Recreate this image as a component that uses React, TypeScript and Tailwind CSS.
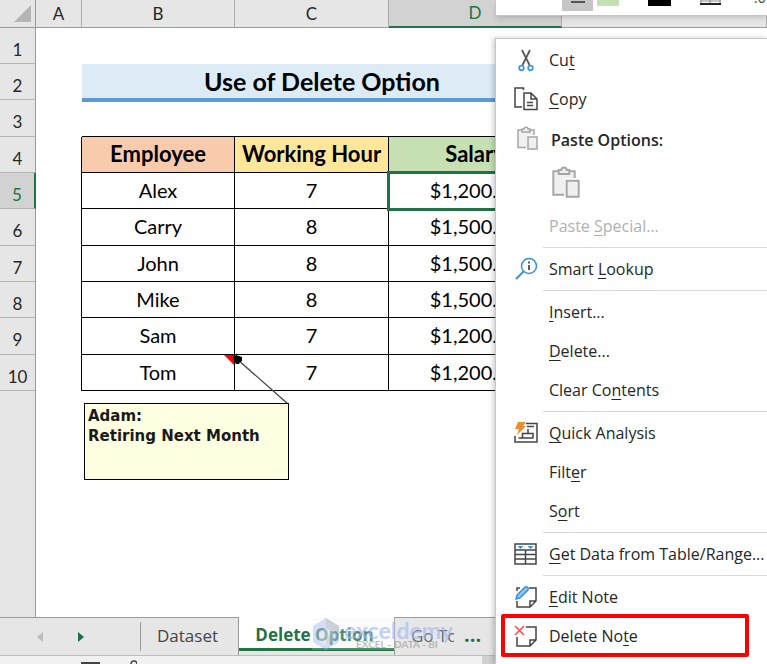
import type { ReactNode } from 'react'
import clsx from 'clsx'

interface Employee {
  row: number
  name: string
  hours: number
  salary: string
  tall?: boolean
  hasNote?: boolean
}

const employees: Employee[] = [
  { row: 5, name: 'Alex', hours: 7, salary: '$1,200.00' },
  { row: 6, name: 'Carry', hours: 8, salary: '$1,500.00', tall: true },
  { row: 7, name: 'John', hours: 8, salary: '$1,500.00' },
  { row: 8, name: 'Mike', hours: 8, salary: '$1,500.00' },
  { row: 9, name: 'Sam', hours: 7, salary: '$1,200.00', tall: true },
  { row: 10, name: 'Tom', hours: 7, salary: '$1,200.00', hasNote: true },
]

const SELECTED_ROW = 5

function RowHeader({ row }: { row: number }) {
  const selected = row === SELECTED_ROW
  return (
    <th
      scope="row"
      className={clsx(
        'border-b border-b-[#b4b4b4] p-0 pt-2 text-[17px]/6 font-normal',
        selected
          ? 'border-r-2 border-r-[#217346] bg-[#d2d2d2] text-[#217346]'
          : 'border-r border-r-[#9b9b9b] bg-[#e6e6e6] text-[#262626]'
      )}
    >
      {row}
    </th>
  )
}

function ColumnHeader({ letter, selected }: { letter: string; selected?: boolean }) {
  return (
    <th
      scope="col"
      className={clsx(
        'border-r border-r-[#ababab] p-0 text-[17px]/6 font-normal',
        selected
          ? 'border-b-2 border-b-[#217346] bg-[#d2d2d2] text-[#217346]'
          : 'border-b border-b-[#9b9b9b] bg-[#e6e6e6] text-[#262626]'
      )}
    >
      {letter}
    </th>
  )
}

function Sheet() {
  const cell = 'border-r border-b border-black p-0 pb-0.5 text-center'
  return (
    <div className="relative flex min-h-0 flex-1 flex-col overflow-hidden bg-white font-['Lato','Liberation_Sans',sans-serif]">
      <table className="w-full shrink-0 table-fixed border-separate border-spacing-0">
        <colgroup>
          <col className="w-9" />
          <col className="w-[46px]" />
          <col className="w-[153px]" />
          <col className="w-[154px]" />
          <col className="w-[173px]" />
          <col />
        </colgroup>
        <thead>
          <tr className="h-7">
            <th className="border-r border-b border-[#9b9b9b] bg-[#e6e6e6] p-0">
              <svg className="ml-3.5 size-[17px]" viewBox="0 0 17 17" aria-label="Select all">
                <path d="M17 0v17H0z" fill="#b4b4b4" />
              </svg>
            </th>
            <ColumnHeader letter="A" />
            <ColumnHeader letter="B" />
            <ColumnHeader letter="C" />
            <ColumnHeader letter="D" selected />
            <ColumnHeader letter="" />
          </tr>
        </thead>
        <tbody>
          <tr className="h-9">
            <RowHeader row={1} />
            <td colSpan={5} />
          </tr>
          <tr className="h-9">
            <RowHeader row={2} />
            <td />
            <td
              colSpan={3}
              className="border-b-2 border-[#5b9bd5] bg-[#ddebf7] p-0 text-center text-[25px]/8 font-bold text-black"
            >
              Use of Delete Option
            </td>
            <td />
          </tr>
          <tr className="h-[37px]">
            <RowHeader row={3} />
            <td className="border-0" />
            <td colSpan={3} className="border-t-2 border-b border-t-[#5b9bd5] border-b-black" />
            <td />
          </tr>
          <tr className="h-9 text-[22px]/7 font-bold text-black">
            <RowHeader row={4} />
            <td className="border-r border-black" />
            <td className={clsx(cell, 'bg-[#f8cbad]')}>Employee</td>
            <td className={clsx(cell, 'bg-[#ffe699]')}>Working Hour</td>
            <td className={clsx(cell, 'bg-[#c6e0b4]')}>Salary</td>
            <td />
          </tr>
          {employees.map((employee) => (
            <tr
              key={employee.row}
              className={clsx('text-xl/7 text-black', employee.tall ? 'h-[37px]' : 'h-9')}
            >
              <RowHeader row={employee.row} />
              <td className="border-r border-black" />
              <td className={clsx(cell, employee.hasNote && 'relative')}>
                {employee.name}
                {employee.hasNote && (
                  <svg className="absolute top-0 right-0 size-2.5" viewBox="0 0 10 10" aria-hidden>
                    <path d="M0 0h10v10z" fill="#ff0000" />
                  </svg>
                )}
              </td>
              <td className={cell}>{employee.hours}</td>
              <td
                className={clsx(
                  cell,
                  employee.row === SELECTED_ROW &&
                    'relative z-10 outline-3 -outline-offset-1 outline-[#217346]'
                )}
              >
                {employee.salary}
              </td>
              <td />
            </tr>
          ))}
        </tbody>
      </table>
      {/* Unused rows */}
      <div className="w-9 flex-1 border-r border-[#9b9b9b] bg-[#e6e6e6]" />

      {/* Note on B10 */}
      <svg className="absolute top-[353px] left-[230px] h-[52px] w-[60px]" viewBox="0 0 60 52" aria-hidden>
        <path d="M7 6l51 45" stroke="#404040" strokeWidth="1.3" />
        <path d="M3 4l3-2 6 2v4l-2 1-1 2H6L4 8z" fill="#000" />
      </svg>
      <div className="absolute top-[403px] left-[84px] h-[77px] w-[205px] border border-black bg-[#ffffe1] px-[3px] py-0.5 font-['DejaVu_Sans',sans-serif] text-[15px]/5 font-bold text-[#1a1a1a]">
        <p>Adam:</p>
        <p>Retiring Next Month</p>
      </div>
    </div>
  )
}

function Watermark() {
  return (
    <div className="pointer-events-none absolute top-0 left-[312px] flex h-8 w-[142px] items-center bg-[#f0f0f0]/30 opacity-70">
      <svg className="h-8 w-7 shrink-0" viewBox="0 0 28 32" aria-hidden>
        <path d="M14 0l13 8v16l-13 8L1 24V8z" fill="#a9bdf2" fillOpacity="0.7" />
        <path d="M14 0l13 8v8L14 10z" fill="#b5b5b5" fillOpacity="0.7" />
        <path d="M14 10l7 5v8l-7 4-7-4v-8z" fill="#ededed" fillOpacity="0.6" />
        <path d="M14 20l7-5v8l-7 4z" fill="#b5b5b5" fillOpacity="0.6" />
      </svg>
      <div className="ml-1 font-['Lato',sans-serif]">
        <p className="text-[23px]/5 font-bold text-[#a9bdf2]">exceldemy</p>
        <p className="ml-3 text-[10px]/2 font-bold whitespace-nowrap text-[#a3a3a3]">EXCEL - DATA - BI</p>
      </div>
    </div>
  )
}

function TabBar() {
  return (
    <div className="relative flex h-[39px] shrink-0 items-stretch border-t border-b border-t-[#9b9b9b] border-b-[#bdbdbd] bg-[#e6e6e6] font-['Open_Sans',sans-serif] text-[17px] text-[#444]">
      <button type="button" aria-label="Previous sheet" className="w-11 pl-9">
        <svg className="size-2.5" viewBox="0 0 10 10">
          <path d="M7 0v10L1 5z" fill="#bdbdbd" />
        </svg>
      </button>
      <button type="button" aria-label="Next sheet" className="w-24 pl-[33px]">
        <svg className="size-2.5" viewBox="0 0 10 10">
          <path d="M1 0v10l6-5z" fill="#1e6f42" />
        </svg>
      </button>
      <div className="my-1 w-px bg-[#9b9b9b]" />
      <button type="button" className="w-[98px] border-r border-[#9b9b9b] pr-1 pb-0.5">
        Dataset
      </button>
      <button
        type="button"
        className="-mt-px mb-1 w-[155px] border-b-3 border-[#217346] bg-white pt-1 pr-1 font-bold text-[#217346]"
      >
        Delete Option
      </button>
      <button type="button" className="w-[60px] overflow-hidden border-l border-[#9b9b9b] pb-0.5 pl-4 text-left whitespace-nowrap">
        Go To
      </button>
      <button type="button" className="pb-1 pl-2.5 text-xl font-bold text-[#1e6f42]">
        ...
      </button>
      <Watermark />
    </div>
  )
}

function StatusBar() {
  return (
    <div className="flex h-2 shrink-0 items-end bg-[#f1f1f1]">
      <svg className="ml-[81px] h-2 w-14" viewBox="0 0 56 8" aria-hidden>
        <path d="M0 7h19" stroke="#444" strokeWidth="2" />
        <circle cx="53" cy="8" r="3" fill="none" stroke="#444" strokeWidth="1.5" />
      </svg>
      <div className="ml-auto h-full w-[285px] bg-[#d0d0d0]" />
    </div>
  )
}

const icons = {
  cut: (
    <>
      <path d="M8 2l7.500 15M16 2L8.500 17" stroke="#555" strokeWidth="1.700" fill="none" />
      <circle cx="7.500" cy="20" r="2.300" stroke="#3a96dd" strokeWidth="1.700" fill="none" />
      <circle cx="16.500" cy="20" r="2.300" stroke="#3a96dd" strokeWidth="1.700" fill="none" />
    </>
  ),
  copy: (
    <g fill="none" stroke="#444" strokeWidth="1.500">
      <path d="M8 20H1V1h8.500v2" />
      <path d="M10 6h7l6 6v10.500H10zM17 6v6h6M13 15.500h6M13 18.500h6" />
    </g>
  ),
  paste: (
    <g fill="none" stroke="#a6a6a6" strokeWidth="1.500">
      <path d="M12 21.500H4V4h16v5h-7v12.500z" fill="#f0f0f0" stroke="none" />
      <path d="M12 21.500H4V4h4M16 4h4v5" />
      <path d="M8 6V3h2c0-2.500 4-2.500 4 0h2v3z" fill="#f0f0f0" />
      <path d="M14 11h9v12h-9z" fill="#f0f0f0" />
    </g>
  ),
  lookup: (
    <>
      <circle cx="15" cy="9" r="7.500" stroke="#3a8fd6" strokeWidth="1.500" fill="none" />
      <path d="M9.500 14.500L2 22" stroke="#3a8fd6" strokeWidth="2" />
      <path d="M15 4.500v2M15 8v5" stroke="#333" strokeWidth="1.600" />
    </>
  ),
  quick: (
    <>
      <path d="M12 2.500h11V21H1v-6M4.500 17h15M8.500 17v-4.500H19V17M14 8v4.500M13 5.500h7" fill="none" stroke="#444" strokeWidth="1.500" />
      <path d="M4 1h8L9 5h3L3 14l2-6H1z" fill="#ed8b33" />
    </>
  ),
  table: (
    <>
      <path d="M1 2h21v20H1zM1 8h21M1 12.500h21M1 17h21M11.500 8v14" fill="none" stroke="#444" strokeWidth="1.500" />
      <path d="M3.500 4h6l-3 3zM13.500 4h6l-3 3z" fill="#3a96dd" />
    </>
  ),
  editNote: (
    <>
      <path d="M3 6V3h3M15 3h7v13l-6 6H3v-6M22 16h-6v6" fill="none" stroke="#444" strokeWidth="1.500" />
      <path d="M2 14l1-4 8-8c2-1 4 1 3 3l-8 8z" fill="#8cc4ef" stroke="#2b88d8" strokeWidth="1.300" />
    </>
  ),
  deleteNote: (
    <>
      <path d="M12 3h10v13l-6 6H3v-9M22 16h-6v6" fill="none" stroke="#444" strokeWidth="1.500" />
      <path d="M1 2l9 9M10 2l-9 9" stroke="#f0565a" strokeWidth="1.700" />
    </>
  ),
}

type IconName = keyof typeof icons

function Icon({ name, className }: { name: IconName; className?: string }) {
  return (
    <svg className={clsx('shrink-0', className ?? 'size-6')} viewBox="0 0 24 24" aria-hidden>
      {icons[name]}
    </svg>
  )
}

interface MenuItemProps {
  icon?: IconName
  disabled?: boolean
  children: ReactNode
}

function MenuItem({ icon, disabled, children }: MenuItemProps) {
  return (
    <button
      type="button"
      role="menuitem"
      disabled={disabled}
      className={clsx(
        'flex h-[39px] w-full items-center pl-[18px] text-left whitespace-nowrap',
        disabled ? 'text-[#b1b1b1]' : 'text-[#262626]'
      )}
    >
      <span className="mr-[11px] size-6 shrink-0">{icon && <Icon name={icon} />}</span>
      <span>{children}</span>
    </button>
  )
}

function Key({ children }: { children: string }) {
  return <span className="underline underline-offset-3">{children}</span>
}

function Separator() {
  return <hr className="mt-0.5 ml-[47px] h-0.5 border-0 border-t border-t-[#d8d8d8]" />
}

function MiniToolbar() {
  return (
    <div className="absolute top-0 right-0 left-[495px] flex h-4 items-start border-b border-l border-[#c6c6c6] bg-white pl-[66px] shadow-md">
      <div className="h-[11px] w-[31px] bg-[#c6c6c6] pt-px">
        <div className="mx-auto h-0.5 w-3.5 bg-[#555]" />
      </div>
      <div className="ml-1 h-1.5 w-[22px] bg-[#c6e0b4]" />
      <div className="ml-[29px] h-1.5 w-[23px] bg-black" />
      <svg className="ml-[29px] h-[5px] w-[21px]" viewBox="0 0 21 5" aria-hidden>
        <path d="M0 4h21" stroke="#222" strokeWidth="2" />
        <path d="M1 0v3M10 0v3M20 0v3M0 1h21" stroke="#888" />
      </svg>
      <span className="-mt-3 ml-[33px] font-['Open_Sans',sans-serif] text-sm/5 text-[#444]">.0</span>
    </div>
  )
}

function ContextMenu() {
  return (
    <div
      role="menu"
      className="absolute top-[38px] right-0 bottom-0 left-[495px] z-20 overflow-hidden border-t border-l border-[#c6c6c6] bg-white pt-px font-['Open_Sans',sans-serif] text-base shadow-[-2px_0_5px_rgba(0,0,0,0.2)]"
    >
      <MenuItem icon="cut">
        Cu<Key>t</Key>
      </MenuItem>
      <MenuItem icon="copy">
        <Key>C</Key>opy
      </MenuItem>
      <div className="flex h-[43px] gap-[13px] pt-2 pl-[18px] font-semibold whitespace-nowrap text-[#262626]">
        <Icon name="paste" />
        <span className="pt-0.5">Paste Options:</span>
      </div>
      <button type="button" aria-label="Paste" className="flex h-[45px] items-center pb-1 pl-[52px]">
        <Icon name="paste" className="size-8" />
      </button>
      <MenuItem disabled>
        Paste <Key>S</Key>pecial...
      </MenuItem>
      <Separator />
      <MenuItem icon="lookup">
        Smart <Key>L</Key>ookup
      </MenuItem>
      <Separator />
      <MenuItem>
        <Key>I</Key>nsert...
      </MenuItem>
      <MenuItem>
        <Key>D</Key>elete...
      </MenuItem>
      <MenuItem>
        Clear Co<Key>n</Key>tents
      </MenuItem>
      <Separator />
      <MenuItem icon="quick">
        <Key>Q</Key>uick Analysis
      </MenuItem>
      <MenuItem>
        Filt<Key>e</Key>r
      </MenuItem>
      <MenuItem>
        S<Key>o</Key>rt
      </MenuItem>
      <Separator />
      <MenuItem icon="table">
        <Key>G</Key>et Data from Table/Range...
      </MenuItem>
      <Separator />
      <MenuItem icon="editNote">
        <Key>E</Key>dit Note
      </MenuItem>
      <div className="relative">
        <MenuItem icon="deleteNote">
          Delete No<Key>t</Key>e
        </MenuItem>
        <div className="pointer-events-none absolute -inset-y-0.5 left-[5px] w-[248px] rounded-xs border-4 border-[#ff0000]" />
      </div>
    </div>
  )
}

export default function App() {
  return (
    <div className="relative flex h-screen flex-col overflow-hidden">
      <Sheet />
      <TabBar />
      <StatusBar />
      <MiniToolbar />
      <ContextMenu />
    </div>
  )
}
